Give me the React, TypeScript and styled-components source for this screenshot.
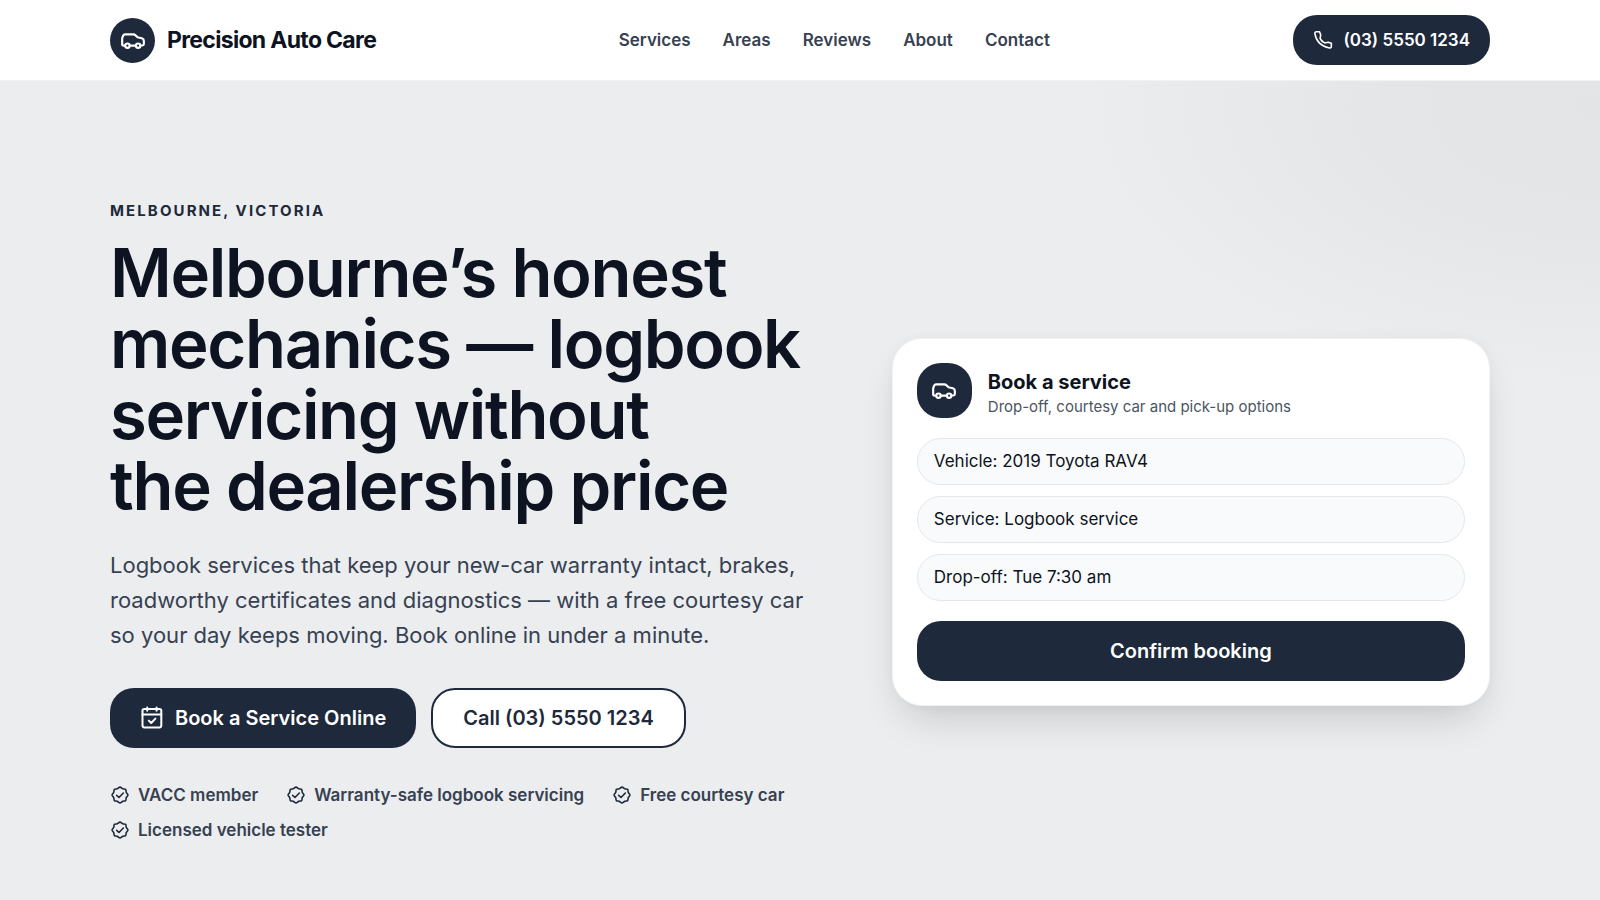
import React, { useState } from 'react';
import styled, { createGlobalStyle, css } from 'styled-components';

const color = {
  navy: '#1e293b',
  ink: '#0d1320',
  body: '#374151',
  muted: '#4b5563',
  line: '#e5e7eb',
  faintLine: '#f1f2f3',
  field: '#f9fafb',
  page: '#ebedef',
};

const GlobalStyle = createGlobalStyle`
  *, *::before, *::after { box-sizing: border-box; }
  body {
    margin: 0;
    background: ${color.page};
    color: ${color.ink};
    font-family: Inter, "Liberation Sans", sans-serif;
  }
  h1, h2, p, ul { margin: 0; padding: 0; }
  a { color: inherit; text-decoration: none; }
`;

const Page = styled.div`
  display: flex;
  flex-direction: column;
  min-height: 100vh;
`;

const container = css`
  width: 100%;
  max-width: 1420px;
  margin: 0 auto;
  padding: 0 20px;
`;

const Header = styled.header`
  background: #fff;
  border-bottom: 1px solid ${color.faintLine};
`;

const HeaderInner = styled.div`
  ${container}
  display: flex;
  align-items: center;
  justify-content: space-between;
  height: 80px;
`;

const Brand = styled.a`
  display: flex;
  align-items: center;
  gap: 12px;
  font-size: 23px;
  font-weight: 700;
  letter-spacing: -0.03em;
`;

const IconTile = styled.span<{ $size: number }>`
  display: grid;
  place-items: center;
  flex: none;
  width: ${(p) => p.$size}px;
  height: ${(p) => p.$size}px;
  border-radius: 24px;
  background: ${color.navy};
  color: #fff;
`;

const Nav = styled.nav`
  display: flex;
  gap: 32px;
  color: ${color.body};
  font-size: 17px;
  font-weight: 600;
`;

const PhoneLink = styled.a`
  display: flex;
  align-items: center;
  gap: 11px;
  height: 50px;
  padding: 0 20px;
  border-radius: 24px;
  background: ${color.navy};
  color: #fff;
  font-size: 17px;
  font-weight: 600;
`;

const Hero = styled.main`
  flex: 1;
  background:
    radial-gradient(
      540px 290px at 100% 3%,
      rgba(30, 30, 35, 0.045),
      rgba(30, 30, 35, 0.038) 30%,
      rgba(30, 30, 35, 0)
    )
    ${color.page};
`;

const HeroInner = styled.div`
  ${container}
  display: grid;
  grid-template-columns: 6fr 5fr;
  align-items: center;
  gap: 64px;
  padding-top: 120px;
  padding-bottom: 56px;
`;

const Copy = styled.div`
  min-width: 0;
`;

const Eyebrow = styled.p`
  color: ${color.navy};
  font-size: 15px;
  font-weight: 700;
  line-height: 20px;
  letter-spacing: 0.14em;
  text-transform: uppercase;
`;

const Headline = styled.h1`
  margin-top: 16px;
  font-size: 67px;
  font-weight: 600;
  line-height: 71px;
  letter-spacing: -0.02em;
`;

const Lead = styled.p`
  margin-top: 27px;
  color: ${color.body};
  font-size: 22px;
  line-height: 35px;
`;

const Actions = styled.div`
  display: flex;
  flex-wrap: wrap;
  gap: 15px;
  margin-top: 35px;
`;

const button = css`
  display: flex;
  align-items: center;
  justify-content: center;
  gap: 11px;
  height: 60px;
  padding: 0 30px;
  border: none;
  border-radius: 24px;
  font: 600 20px Inter, "Liberation Sans", sans-serif;
  cursor: pointer;
`;

const PrimaryLink = styled.a`
  ${button}
  background: ${color.navy};
  && { color: #fff; }
`;

const OutlineLink = styled.a`
  ${button}
  border: 2px solid ${color.navy};
  background: #fff;
  && { color: ${color.navy}; }
`;

const SubmitButton = styled.button`
  ${button}
  width: 100%;
  margin-top: 20px;
  background: ${color.navy};
  color: #fff;
`;

const TrustList = styled.ul`
  display: flex;
  flex-wrap: wrap;
  gap: 11px 28px;
  margin-top: 35px;
  list-style: none;
`;

const TrustItem = styled.li`
  display: flex;
  align-items: center;
  gap: 8px;
  color: ${color.body};
  font-size: 17px;
  font-weight: 600;
  line-height: 24px;

  svg { color: ${color.navy}; }
`;

const Card = styled.form`
  padding: 24px;
  border: 1px solid ${color.faintLine};
  border-radius: 30px;
  background: #fff;
  box-shadow: 0 20px 40px -12px rgba(0, 0, 0, 0.18), 0 0 12px rgba(0, 0, 0, 0.03);
`;

const CardHead = styled.div`
  display: flex;
  align-items: center;
  gap: 16px;
  margin-bottom: 20px;
`;

const CardHeadText = styled.div`
  padding-top: 5px;
`;

const CardTitle = styled.h2`
  font-size: 20px;
  font-weight: 700;
  line-height: 28px;
`;

const CardNote = styled.p`
  color: ${color.muted};
  font-size: 15px;
  line-height: 22px;
`;

const Fields = styled.div`
  display: grid;
  gap: 11px;
`;

const Field = styled.input`
  width: 100%;
  height: 47px;
  padding: 0 16px;
  border: 1px solid ${color.line};
  border-radius: 24px;
  background: ${color.field};
  color: ${color.ink};
  font: 400 17px Inter, "Liberation Sans", sans-serif;
`;

const Svg = styled.svg.attrs({
  viewBox: '0 0 24 24',
  fill: 'none',
  stroke: 'currentColor',
  strokeLinecap: 'round',
  strokeLinejoin: 'round',
  'aria-hidden': true,
})`
  display: block;
  flex: none;
`;

const CarIcon = () => (
  <Svg width={26} height={26} strokeWidth={2}>
    <path d="M4.600 17.200H3.400c-.8 0-1.400-.5-1.400-1.300v-5.100c0-.5.1-.9.3-1.300l.7-1.600c.3-.7.8-1.100 1.600-1.100h7.800c.7 0 1.200.2 1.700.7l2.100 1.900 3.900 1c1.200.4 1.900 1.200 1.900 2.400v3c0 .8-.5 1.300-1.300 1.300h-1.800M9 17.200h5.600" />
    <circle cx="6.900" cy="17.200" r="2" />
    <circle cx="16.700" cy="17.200" r="2" />
  </Svg>
);

const PhoneIcon = () => (
  <Svg width={20} height={20} strokeWidth={1.9}>
    <path d="M18.118 14.702 14 15.500c-2.782-1.396-4.500-3-5.500-5.500l.77-4.130L7.815 2H4.064c-1.128 0-2.016.932-1.847 2.047C2.637 6.830 3.877 11.877 7.500 15.500c3.805 3.805 9.286 5.456 12.302 6.113 1.165.253 2.198-.656 2.198-1.848v-3.784z" />
  </Svg>
);

const CalendarIcon = () => (
  <Svg width={24} height={24} strokeWidth={2}>
    <rect x="2.500" y="3" width="18.800" height="18.400" rx="1.800" />
    <path d="M2.500 8.400h18.800M7.200 1.600v3.200M16.600 1.600v3.200M8.800 14.600l2.400 2.400 4.200-4.400" />
  </Svg>
);

const BadgeIcon = () => (
  <Svg width={20} height={20} strokeWidth={1.9}>
    <path d="M18.700 18.700c-.6.6-1.600.5-2.400.6-.9 0-1.400.3-2.100.9-.7.600-1.300 1.300-2.200 1.300s-1.500-.7-2.200-1.300c-.7-.6-1.200-.9-2.100-.9-.8-.1-1.800 0-2.400-.6s-.5-1.600-.6-2.400c0-.9-.3-1.400-.9-2.100-.6-.7-1.300-1.300-1.300-2.200s.7-1.500 1.300-2.200c.6-.7.9-1.200.9-2.100.1-.8 0-1.800.6-2.400s1.600-.5 2.400-.6c.9 0 1.400-.3 2.100-.9.700-.6 1.300-1.300 2.200-1.300s1.500.7 2.200 1.300c.7.6 1.200.9 2.100.9.800.1 1.800 0 2.400.6s.5 1.600.6 2.400c0 .9.3 1.400.9 2.100.6.7 1.300 1.300 1.300 2.200s-.7 1.500-1.300 2.200c-.6.7-.9 1.200-.9 2.100-.1.800 0 1.800-.6 2.400z" />
    <path d="m8 12.400 2.800 2.600 5.200-5.400" />
  </Svg>
);

const navItems = ['Services', 'Areas', 'Reviews', 'About', 'Contact'];

const trustItems = [
  'VACC member',
  'Warranty-safe logbook servicing',
  'Free courtesy car',
  'Licensed vehicle tester',
];

const bookingFields = [
  { name: 'Vehicle', value: 'Vehicle: 2019 Toyota RAV4' },
  { name: 'Service', value: 'Service: Logbook service' },
  { name: 'Drop-off', value: 'Drop-off: Tue 7:30 am' },
];

function BookingCard() {
  const [values, setValues] = useState(bookingFields.map((f) => f.value));
  return (
    <Card onSubmit={(e) => e.preventDefault()}>
      <CardHead>
        <IconTile $size={55}>
          <CarIcon />
        </IconTile>
        <CardHeadText>
          <CardTitle>Book a service</CardTitle>
          <CardNote>Drop-off, courtesy car and pick-up options</CardNote>
        </CardHeadText>
      </CardHead>
      <Fields>
        {bookingFields.map((field, i) => (
          <Field
            key={field.name}
            type="text"
            aria-label={field.name}
            value={values[i]}
            onChange={(e) => setValues(values.map((v, j) => (j === i ? e.target.value : v)))}
          />
        ))}
      </Fields>
      <SubmitButton type="submit">Confirm booking</SubmitButton>
    </Card>
  );
}

export default function App() {
  return (
    <Page>
      <GlobalStyle />
      <Header>
        <HeaderInner>
          <Brand href="#home">
            <IconTile $size={45}>
              <CarIcon />
            </IconTile>
            Precision Auto Care
          </Brand>
          <Nav>
            {navItems.map((item) => (
              <a key={item} href={`#${item.toLowerCase()}`}>
                {item}
              </a>
            ))}
          </Nav>
          <PhoneLink href="tel:+61355501234">
            <PhoneIcon />
            (03) 5550 1234
          </PhoneLink>
        </HeaderInner>
      </Header>
      <Hero>
        <HeroInner>
          <Copy>
            <Eyebrow>Melbourne, Victoria</Eyebrow>
            <Headline>
              Melbourne’s honest
              <br />
              mechanics — logbook
              <br />
              servicing without
              <br />
              the dealership price
            </Headline>
            <Lead>
              Logbook services that keep your new-car warranty intact, brakes, roadworthy
              certificates and diagnostics — with a free courtesy car so your day keeps moving.
              Book online in under a minute.
            </Lead>
            <Actions>
              <PrimaryLink href="#book">
                <CalendarIcon />
                Book a Service Online
              </PrimaryLink>
              <OutlineLink href="tel:+61355501234">Call (03) 5550 1234</OutlineLink>
            </Actions>
            <TrustList>
              {trustItems.map((item) => (
                <TrustItem key={item}>
                  <BadgeIcon />
                  {item}
                </TrustItem>
              ))}
            </TrustList>
          </Copy>
          <BookingCard />
        </HeroInner>
      </Hero>
    </Page>
  );
}
